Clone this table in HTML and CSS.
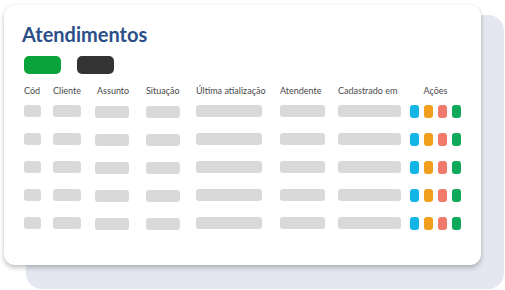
FILE: index.html
```html
<!DOCTYPE html>
<html lang="pt-BR">
<head>
<meta charset="utf-8">
<title>Atendimentos</title>
<link rel="stylesheet" href="styles.css">
</head>
<body>
<div class="stage">
  <div class="back-card"></div>
  <div class="card">
    <h1 class="title">Atendimentos</h1>
    <div class="buttons">
      <span class="btn btn-green"></span>
      <span class="btn btn-dark"></span>
    </div>
    <div class="table">
      <div class="row head">
        <span>Cód</span>
        <span>Cliente</span>
        <span class="h-assunto">Assunto</span>
        <span>Situação</span>
        <span>Última atialização</span>
        <span>Atendente</span>
        <span>Cadastrado em</span>
        <span class="h-acoes">Ações</span>
      </div>
      <div class="row">
        <i class="bar w-cod"></i><i class="bar w-cli"></i><i class="bar w-ass low"></i><i class="bar w-sit low"></i><i class="bar w-ult"></i><i class="bar w-ate"></i><i class="bar w-cad"></i>
        <span class="acts"><i class="a blue"></i><i class="a orange"></i><i class="a red"></i><i class="a green"></i></span>
      </div>
      <div class="row">
        <i class="bar w-cod"></i><i class="bar w-cli"></i><i class="bar w-ass low"></i><i class="bar w-sit low"></i><i class="bar w-ult"></i><i class="bar w-ate"></i><i class="bar w-cad"></i>
        <span class="acts"><i class="a blue"></i><i class="a orange"></i><i class="a red"></i><i class="a green"></i></span>
      </div>
      <div class="row">
        <i class="bar w-cod"></i><i class="bar w-cli"></i><i class="bar w-ass low"></i><i class="bar w-sit low"></i><i class="bar w-ult"></i><i class="bar w-ate"></i><i class="bar w-cad"></i>
        <span class="acts"><i class="a blue"></i><i class="a orange"></i><i class="a red"></i><i class="a green"></i></span>
      </div>
      <div class="row">
        <i class="bar w-cod"></i><i class="bar w-cli"></i><i class="bar w-ass low"></i><i class="bar w-sit low"></i><i class="bar w-ult"></i><i class="bar w-ate"></i><i class="bar w-cad"></i>
        <span class="acts"><i class="a blue"></i><i class="a orange"></i><i class="a red"></i><i class="a green"></i></span>
      </div>
      <div class="row">
        <i class="bar w-cod"></i><i class="bar w-cli"></i><i class="bar w-ass low"></i><i class="bar w-sit low"></i><i class="bar w-ult"></i><i class="bar w-ate"></i><i class="bar w-cad"></i>
        <span class="acts"><i class="a blue"></i><i class="a orange"></i><i class="a red"></i><i class="a green"></i></span>
      </div>
    </div>
  </div>
</div>
</body>
</html>
```
FILE: styles.css
```css
* { box-sizing: border-box; }
html, body {
  margin: 0;
  padding: 0;
  background: #ffffff;
  width: 505px;
  height: 290px;
  overflow: hidden;
}
body {
  font-family: Lato, "Open Sans", sans-serif;
}
.stage {
  position: relative;
  width: 505px;
  height: 290px;
  padding: 5px 0 0 4px;
}
.back-card {
  position: absolute;
  left: 26px;
  top: 15px;
  width: 478px;
  height: 274px;
  background: #e4e7ef;
  border-radius: 16px;
}
.card {
  position: relative;
  width: 477px;
  height: 260px;
  background: #ffffff;
  border-radius: 11px;
  box-shadow: 0 3px 5px rgba(0, 0, 0, 0.22), 0 0 3px rgba(0, 0, 0, 0.07);
  padding: 16px 0 0 20px;
}
.title {
  margin: 0 0 0 -2px;
  padding-top: 1px;
  height: 24px;
  font-size: 20px;
  line-height: 24px;
  font-weight: 700;
  color: #2b4f88;
}
.buttons {
  display: flex;
  gap: 16px;
  margin-top: 11px;
}
.btn {
  display: block;
  width: 37px;
  height: 18px;
  border-radius: 5px;
}
.btn-green { background: #0ba33b; }
.btn-dark { background: #333333; }
.table {
  margin-top: 11px;
}
.row {
  display: grid;
  grid-template-columns: 29px 42px 51px 50px 84px 58px 72px 51px;
  align-items: center;
  height: 28px;
}
.row.head {
  height: 12px;
  font-size: 9px;
  line-height: 12px;
  color: #4a4a4a;
  white-space: nowrap;
}
.h-assunto { padding-left: 2px; }
.h-acoes { text-align: center; }
.bar {
  display: block;
  height: 12px;
  border-radius: 3px;
  background: #d9d9d9;
}
.bar.low { transform: translateY(1px); }
.w-cod { width: 17px; }
.w-cli { width: 28px; }
.w-ass { width: 34px; }
.w-sit { width: 34px; }
.w-ult { width: 66px; }
.w-ate { width: 45px; }
.w-cad { width: 63px; }
.acts {
  display: flex;
  gap: 5px;
}
.a {
  display: block;
  width: 9px;
  height: 13px;
  border-radius: 3px;
}
.a.blue { background: #12b5e5; }
.a.orange { background: #f0a01c; }
.a.red { background: #f07b6c; }
.a.green { background: #0ea85a; }
```
